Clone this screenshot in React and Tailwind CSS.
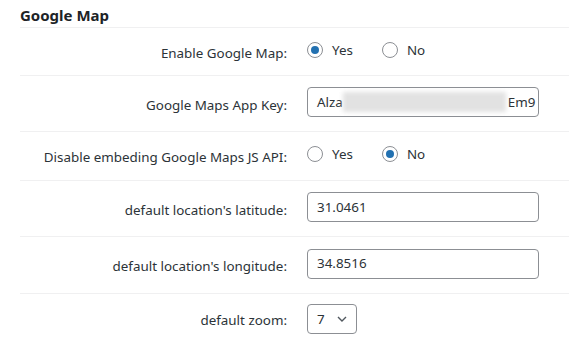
import React from "react";

const Radio = ({ checked, label }) => (
  <label className="flex items-center">
    <span className="w-4 h-4 rounded-full border border-[#8c8f94] bg-white flex items-center justify-center">
      {checked && <span className="w-2 h-2 rounded-full bg-[#2271b1]" />}
    </span>
    <span className="ml-[9px] text-[13.4px] text-[#2c3338]">{label}</span>
  </label>
);

const Row = ({ label, h, children }) => (
  <div className={`grid grid-cols-[267px_1fr] gap-x-5 items-center border-t border-[#f0f0f1] ${h}`}>
    <div className="text-right text-[13.4px] text-[#2c3338] pt-[3px]">{label}</div>
    <div className="flex items-center">{children}</div>
  </div>
);

const TextInput = ({ children }) => (
  <div className="w-[232px] h-[30px] border border-[#8c8f94] rounded-[4px] bg-white flex items-center pl-[9px] pr-[8px] text-[13.4px] text-[#2c3338] overflow-hidden whitespace-nowrap">
    {children}
  </div>
);

export default function App() {
  return (
    <div className="w-[569px] h-[344px] overflow-hidden bg-white pl-5 font-['Noto_Sans',sans-serif]">
      <h2 className="h-[27px] pt-[5px] leading-[20px] text-[15px] font-bold text-[#1d2327]">Google Map</h2>
      <Row label="Enable Google Map:" h="h-[48px]">
        <div className="flex items-center gap-[29px] -mt-[3px]">
          <Radio checked label="Yes" />
          <Radio label="No" />
        </div>
      </Row>
      <Row label="Google Maps App Key:" h="h-[56px]">
        <div className="-mt-[3px]">
          <TextInput>
            <span>Alza</span>
            <span className="inline-block w-[163px] h-[20px] bg-[#e2e2e2] blur-[2px] shrink-0" />
            <span className="ml-[2px] shrink-0">Em9</span>
          </TextInput>
        </div>
      </Row>
      <Row label="Disable embeding Google Maps JS API:" h="h-[49px]">
        <div className="flex items-center gap-[29px] -mt-[3px]">
          <Radio label="Yes" />
          <Radio checked label="No" />
        </div>
      </Row>
      <Row label="default location's latitude:" h="h-[56px]">
        <div className="-mt-[3px]">
          <TextInput>31.0461</TextInput>
        </div>
      </Row>
      <Row label="default location's longitude:" h="h-[57px]">
        <div className="-mt-[3px]">
          <TextInput>34.8516</TextInput>
        </div>
      </Row>
      <div className="grid grid-cols-[267px_1fr] gap-x-5 border-t border-[#f0f0f1] pt-[10px]">
        <div className="text-right text-[13.4px] text-[#2c3338] pt-[6px]">default zoom:</div>
        <div className="w-[50px] h-[30px] border border-[#8c8f94] rounded-[4px] bg-white flex items-center pl-[9px] text-[13.4px] text-[#2c3338]">
          <span>7</span>
          <svg className="ml-[12px]" width="10" height="6" viewBox="0 0 10 6" fill="none">
            <path d="M1 1l4 4 4-4" stroke="#50575e" strokeWidth="1.4" />
          </svg>
        </div>
      </div>
    </div>
  );
}
